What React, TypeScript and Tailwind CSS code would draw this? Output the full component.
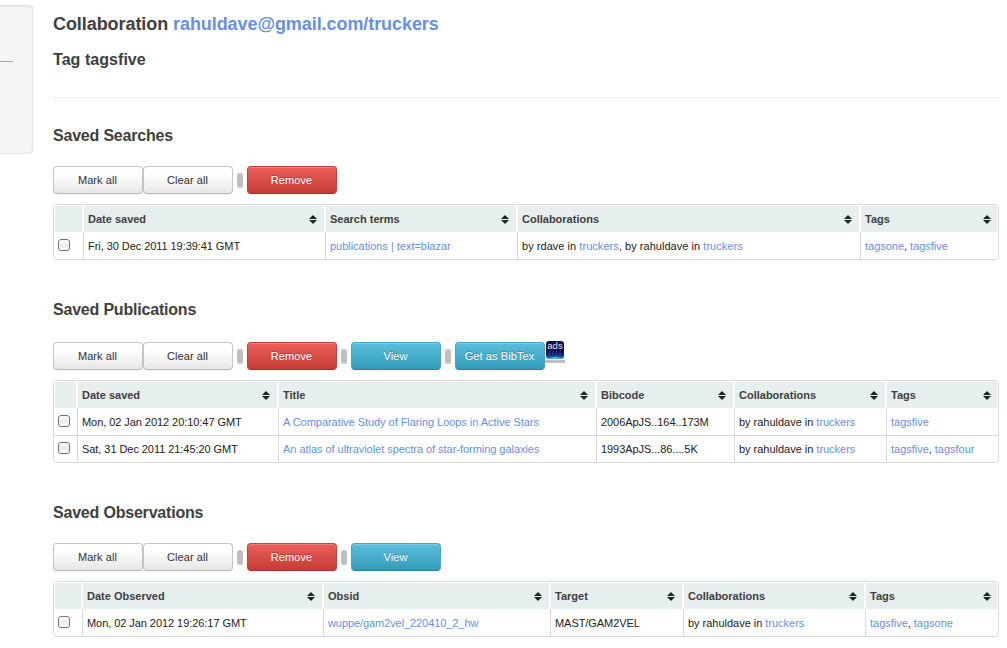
import type { ReactNode } from "react";

function Link({ children }: { children: ReactNode }) {
  return <a href="#" className="text-[#6790e6]">{children}</a>;
}

function Button({ kind = "plain", children }: { kind?: "plain" | "danger" | "info"; children: ReactNode }) {
  const styles = {
    plain: "border-[#c4c4c4] border-b-[#b8b8b8] bg-linear-to-b from-white from-25% to-[#e6e6e6] text-[#333]",
    danger:
      "border-[#c8403b] border-b-[#a63430] bg-linear-to-b from-[#ee5f5b] to-[#c43c35] text-white [text-shadow:0_-1px_0_rgba(0,0,0,0.25)]",
    info: "border-[#45a5c4] border-b-[#2b83a0] bg-linear-to-b from-[#5bc0de] to-[#339bb9] text-white [text-shadow:0_-1px_0_rgba(0,0,0,0.25)]",
  };
  return (
    <button
      className={`h-7 w-[90px] shrink-0 whitespace-nowrap rounded-[4px] border pr-px text-center text-[11px] leading-[26px] tracking-[0.08px] shadow-[inset_0_1px_0_rgba(255,255,255,0.2),0_1px_2px_rgba(0,0,0,0.05)] ${styles[kind]}`}
    >
      {children}
    </button>
  );
}

function Divider() {
  return <span className="mx-1 mt-px h-[15px] w-1.5 rounded-[3px] bg-[#bfbfbf]" />;
}

function SortIcon() {
  return (
    <svg width="8" height="9" viewBox="0 0 8 9" className="shrink-0 fill-[#1d2424]">
      <path d="M4 0 8 4H0Z" />
      <path d="M0 5H8L4 9Z" />
    </svg>
  );
}

function AdsLogo() {
  return (
    <svg width="20" height="22" viewBox="0 0 20 22" className="-mt-[9px]">
      <defs>
        <linearGradient id="ads" x1="0" y1="0" x2="0" y2="1">
          <stop offset="0" stopColor="#10104f" />
          <stop offset="0.55" stopColor="#080747" />
          <stop offset="0.8" stopColor="#13307f" />
          <stop offset="1" stopColor="#36a5d0" />
        </linearGradient>
      </defs>
      <rect x="0" y="19" width="20" height="3" fill="#bfbfbf" />
      <rect x="1" y="0" width="18" height="18" rx="3" fill="url(#ads)" />
      <path d="M4.500 10v5M8 10v6M11.500 10v5M15 10v5" stroke="#263a9b" strokeWidth="1.2" />
      <path d="M4 17.500q6-3 12 0z" fill="#55d0e5" />
      <text x="10" y="8" textAnchor="middle" fontSize="9.5" fill="#e2e2f4">ads</text>
    </svg>
  );
}

type TableProps = { columns: string; heads: string[]; rows: ReactNode[][] };

function Table({ columns, heads, rows }: TableProps) {
  return (
    <div className="mt-[10px] w-[946px] rounded-[4px] border border-[#d9dddc] text-[11px]">
      <div className={`grid h-[27px] pt-px ${columns}`}>
        <div className="mx-px rounded-tl-[3px] bg-[#e6eeee]" />
        {heads.map((h) => (
          <div
            key={h}
            className="mx-px flex items-center justify-between bg-[#e6eeee] pl-1 pr-[7px] font-bold text-[#404040] last:pr-[6px]"
          >
            <span>{h}</span>
            <SortIcon />
          </div>
        ))}
      </div>
      {rows.map((row, r) => (
        <div key={r} className={`grid h-[27px] ${r > 0 ? "border-t border-[#d9d9d9]" : ""} ${columns}`}>
          <div className={r > 0 ? "pl-1 pt-[6px]" : "pl-1 pt-[7px]"}>
            <span className="block size-3 rounded-[3px] border border-[#777] bg-linear-to-b from-white via-[#e9e9e9] to-white" />
          </div>
          {row.map((cell, i) => (
            <div
              key={i}
              className={`flex items-center whitespace-pre border-l border-[#d9d9d9] pl-1 text-[#222] ${r > 0 ? "" : "pt-[2px]"} ${
                typeof cell === "string" ? "tracking-[-0.06px]" : "tracking-[-0.02px]"
              }`}
            >
              <span>{cell}</span>
            </div>
          ))}
        </div>
      ))}
    </div>
  );
}

function Heading({ children }: { children: ReactNode }) {
  return <h3 className="text-[16px] leading-[18px] font-bold tracking-[-0.2px] text-[#404040]">{children}</h3>;
}

function Tools({ children }: { children: ReactNode }) {
  return <div className="mt-[21px] flex h-7 items-center">{children}</div>;
}

export default function App() {
  return (
    <div className="flex h-[648px] w-[1007px] overflow-hidden bg-white font-['Liberation_Sans',Arial,sans-serif]">
      <aside className="mt-[5px] h-[149px] w-[33px] shrink-0 rounded-r-[4px] border border-l-0 border-[#e6e6e6] bg-[#f5f5f5] pt-[55px] shadow-[inset_0_1px_1px_rgba(0,0,0,0.05)]">
        <hr className="w-[13px] border-[#aaa]" />
      </aside>
      <main className="ml-5 w-[947px] shrink-0">
        <h2 className="mt-[13px] text-[18px] leading-[22px] font-bold tracking-[-0.07px] text-[#404040]">
          Collaboration <Link>rahuldave@gmail.com/truckers</Link>
        </h2>
        <h3 className="mt-[16px] text-[16px] leading-[18px] font-bold tracking-[0.05px] text-[#404040]">Tag tagsfive</h3>
        <hr className="mt-[28px] border-[#eee]" />

        <section className="mt-[29px]">
          <Heading>Saved Searches</Heading>
          <Tools>
            <Button>Mark all</Button>
            <Button>Clear all</Button>
            <Divider />
            <Button kind="danger">Remove</Button>
          </Tools>
          <Table
            columns="grid-cols-[29px_242px_192px_343px_138px]"
            heads={["Date saved", "Search terms", "Collaborations", "Tags"]}
            rows={[
              [
                "Fri, 30 Dec 2011 19:39:41 GMT",
                <Link>publications | text=blazar</Link>,
                <span className="tracking-[0.04px]">by rdave in <Link>truckers</Link>, by rahuldave in <Link>truckers</Link></span>,
                <><Link>tagsone</Link>, <Link>tagsfive</Link></>,
              ],
            ]}
          />
        </section>

        <section className="mt-[41px]">
          <Heading>Saved Publications</Heading>
          <div className="h-[2px]" />
          <Tools>
            <Button>Mark all</Button>
            <Button>Clear all</Button>
            <Divider />
            <Button kind="danger">Remove</Button>
            <Divider />
            <Button kind="info">View</Button>
            <Divider />
            <Button kind="info">Get as BibTex</Button>
            <AdsLogo />
          </Tools>
          <Table
            columns="grid-cols-[23px_201px_318px_138px_152px_112px]"
            heads={["Date saved", "Title", "Bibcode", "Collaborations", "Tags"]}
            rows={[
              [
                "Mon, 02 Jan 2012 20:10:47 GMT",
                <span className="tracking-[-0.04px]"><Link>A Comparative Study of Flaring Loops in Active Stars</Link></span>,
                "2006ApJS..164..173M",
                <>by rahuldave in <Link>truckers</Link></>,
                <Link>tagsfive</Link>,
              ],
              [
                "Sat, 31 Dec 2011 21:45:20 GMT",
                <span className="tracking-[-0.04px]"><Link>An atlas of ultraviolet spectra of star-forming galaxies</Link></span>,
                "1993ApJS...86....5K",
                <>by rahuldave in <Link>truckers</Link></>,
                <><Link>tagsfive</Link>, <Link>tagsfour</Link></>,
              ],
            ]}
          />
        </section>

        <section className="mt-[41px]">
          <Heading>Saved Observations</Heading>
          <Tools>
            <Button>Mark all</Button>
            <Button>Clear all</Button>
            <Divider />
            <Button kind="danger">Remove</Button>
            <Divider />
            <Button kind="info">View</Button>
          </Tools>
          <Table
            columns="grid-cols-[28px_241px_227px_133px_182px_133px]"
            heads={["Date Observed", "Obsid", "Target", "Collaborations", "Tags"]}
            rows={[
              [
                "Mon, 02 Jan 2012 19:26:17 GMT",
                <span className="tracking-[-0.08px]"><Link>wuppe/gam2vel_220410_2_hw</Link></span>,
                "MAST/GAM2VEL",
                <>by rahuldave in <Link>truckers</Link></>,
                <><Link>tagsfive</Link>, <Link>tagsone</Link></>,
              ],
            ]}
          />
        </section>
      </main>
    </div>
  );
}
